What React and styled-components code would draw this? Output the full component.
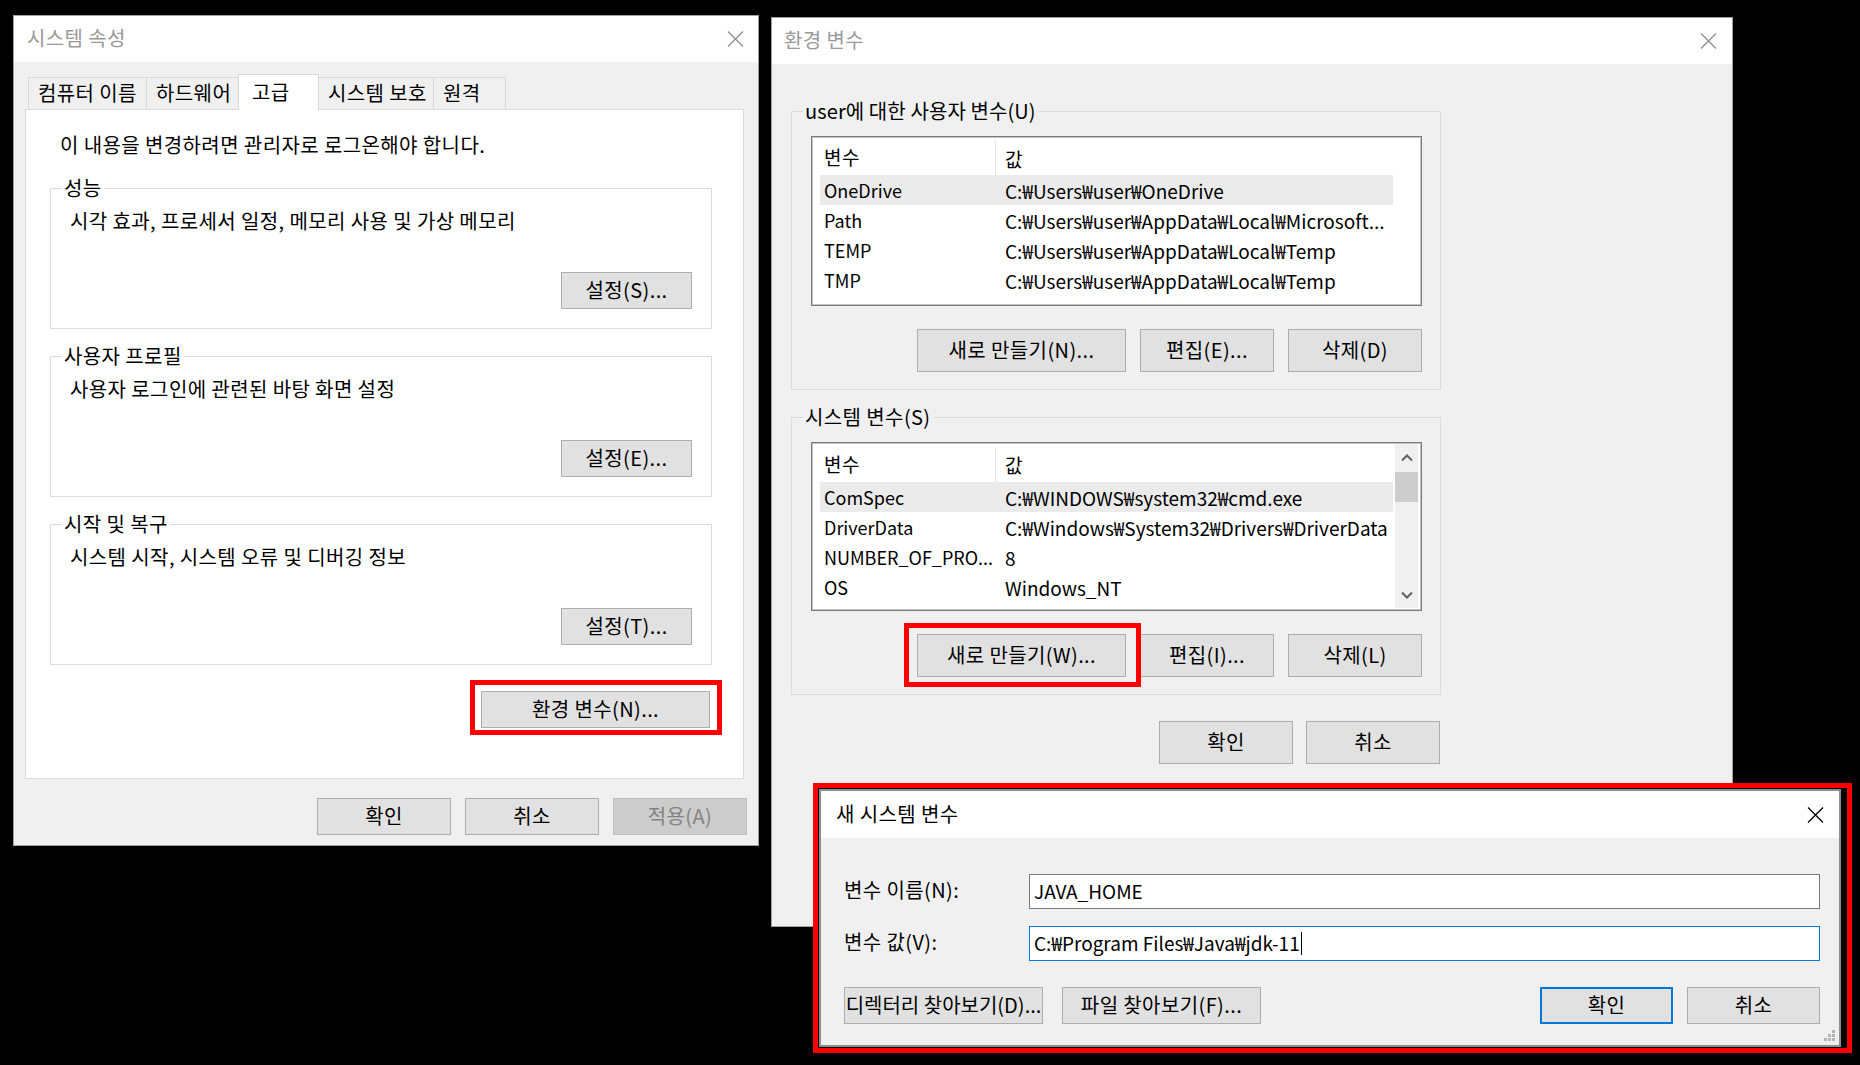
import React from 'react';
import styled, { createGlobalStyle } from 'styled-components';

const GlobalStyle = createGlobalStyle`
  html, body {
    margin: 0;
    padding: 0;
    background: #000;
  }
  body {
    font-family: "Noto Sans CJK KR", "Noto Sans", sans-serif;
  }
`;

const Desktop = styled.div`
  position: relative;
  width: 1860px;
  height: 1065px;
  background: #000;
  overflow: hidden;
`;

// windows sit on a free desktop canvas
const Window = styled.div`
  position: absolute;
  left: ${(p) => p.$left}px;
  top: ${(p) => p.$top}px;
  width: ${(p) => p.$width}px;
  height: ${(p) => p.$height}px;
  box-sizing: border-box;
  display: flex;
  flex-direction: column;
  background: #f0f0f0;
  border: 1px solid #a0a0a0;
  color: #000;
  font-size: 20px;
  letter-spacing: 0.4px;
`;

const TitleBar = styled.div`
  flex: none;
  height: ${(p) => p.$height}px;
  display: flex;
  align-items: center;
  justify-content: space-between;
  padding: 0 ${(p) => p.$padRight || 14}px 0 ${(p) => p.$padLeft || 13}px;
  background: #fff;
`;

const TitleText = styled.span`
  color: ${(p) => (p.$active ? '#000' : '#999')};
  font-size: 20px;
  line-height: 24px;
  padding-bottom: 2px;
`;

const CloseIcon = ({ active }) => (
  <svg width="17" height="16" viewBox="0 0 17 16">
    <path
      d="M1 0.5 L16 15.5 M16 0.5 L1 15.5"
      stroke={active ? '#000' : '#8f8f8f'}
      strokeWidth="1.3"
      fill="none"
    />
  </svg>
);

const Button = styled.button`
  box-sizing: border-box;
  width: ${(p) => p.$width || 134}px;
  height: ${(p) => p.$height || 37}px;
  padding: 0 0 2px 0;
  margin: 0;
  font-family: inherit;
  font-size: 20px;
  letter-spacing: ${(p) => (p.$tight ? 0 : 0.4)}px;
  color: ${(p) => (p.$disabled ? '#838383' : '#000')};
  background: ${(p) => (p.$disabled ? '#cccccc' : '#e1e1e1')};
  border: ${(p) =>
    p.$default ? '2px solid #0078d7' : p.$disabled ? '1px solid #bfbfbf' : '1px solid #adadad'};
  white-space: nowrap;
`;

const Marked = styled.div`
  position: relative;
  display: inline-flex;
`;

// red annotation frame drawn over the screenshot
const RedFrame = styled.div`
  position: absolute;
  top: ${(p) => p.$t}px;
  left: ${(p) => p.$l}px;
  right: ${(p) => p.$r}px;
  bottom: ${(p) => p.$b}px;
  border: 5px solid #ff0000;
  pointer-events: none;
`;

/* ---------- 시스템 속성 ---------- */

const PropsBody = styled.div`
  flex: 1;
  display: flex;
  flex-direction: column;
  padding: 12px 14px 0 11px;
`;

const TabRow = styled.div`
  display: flex;
  align-items: flex-end;
  height: 36px;
  margin-left: 3px;
  margin-bottom: -1px;
  position: relative;
  z-index: 1;
`;

const Tab = styled.div`
  box-sizing: border-box;
  width: ${(p) => p.$width}px;
  height: ${(p) => (p.$active ? 36 : 33)}px;
  display: flex;
  align-items: center;
  padding: 0 0 2px ${(p) => (p.$active ? 13 : 9)}px;
  margin-left: -1px;
  background: ${(p) => (p.$active ? '#fff' : '#f0f0f0')};
  border: 1px solid #d9d9d9;
  border-bottom-color: ${(p) => (p.$active ? '#fff' : '#d9d9d9')};
  white-space: nowrap;
  &:first-child {
    margin-left: 0;
  }
`;

const TabPanel = styled.div`
  box-sizing: border-box;
  height: 670px;
  flex: none;
  display: flex;
  flex-direction: column;
  background: #fff;
  border: 1px solid #d9d9d9;
  padding: 23px 31px 0 24px;
`;

const Notice = styled.div`
  line-height: 24px;
  margin: 0 0 20px 10px;
`;

const Group = styled.fieldset`
  margin: 0 0 16px 0;
  padding: 0 19px 19px 19px;
  border: 1px solid #dcdcdc;
  min-width: 0;
`;

const Legend = styled.legend`
  padding: 0 2px;
  margin-left: -8px;
  line-height: 22px;
  letter-spacing: ${(p) => (p.$tight ? 0.1 : 0.4)}px;
`;

const GroupBody = styled.div`
  height: 99px;
  margin-top: 11px;
  display: flex;
  flex-direction: column;
  justify-content: space-between;
  align-items: flex-start;
`;

const Desc = styled.div`
  line-height: 22px;
`;

const RightRow = styled.div`
  display: flex;
  justify-content: flex-end;
  align-self: stretch;
  gap: ${(p) => p.$gap || 14}px;
  margin-top: ${(p) => p.$top || 0}px;
  margin-right: ${(p) => p.$right || 0}px;
`;

const SettingsGroup = ({ title, desc, button }) => (
  <Group>
    <Legend>{title}</Legend>
    <GroupBody>
      <Desc>{desc}</Desc>
      <RightRow>
        <Button $width={131}>{button}</Button>
      </RightRow>
    </GroupBody>
  </Group>
);

const tabs = [
  ['컴퓨터 이름', 119],
  ['하드웨어', 93],
  ['고급', 81, true],
  ['시스템 보호', 116],
  ['원격', 73],
];

const SystemProperties = () => (
  <Window $left={13} $top={15} $width={746} $height={831}>
    <TitleBar $height={46}>
      <TitleText>시스템 속성</TitleText>
      <CloseIcon />
    </TitleBar>
    <PropsBody>
      <TabRow>
        {tabs.map(([label, w, active]) => (
          <Tab key={label} $width={w} $active={active}>
            {label}
          </Tab>
        ))}
      </TabRow>
      <TabPanel>
        <Notice>이 내용을 변경하려면 관리자로 로그온해야 합니다.</Notice>
        <SettingsGroup title="성능" desc="시각 효과, 프로세서 일정, 메모리 사용 및 가상 메모리" button="설정(S)..." />
        <SettingsGroup title="사용자 프로필" desc="사용자 로그인에 관련된 바탕 화면 설정" button="설정(E)..." />
        <SettingsGroup title="시작 및 복구" desc="시스템 시작, 시스템 오류 및 디버깅 정보" button="설정(T)..." />
        <RightRow $top={10} $right={2}>
          <Marked>
            <Button $width={229}>환경 변수(N)...</Button>
            <RedFrame $t={-11} $l={-11} $r={-12} $b={-7} />
          </Marked>
        </RightRow>
      </TabPanel>
      <RightRow $top={19} $right={-3} $gap={14}>
        <Button>확인</Button>
        <Button>취소</Button>
        <Button $disabled>적용(A)</Button>
      </RightRow>
    </PropsBody>
  </Window>
);

/* ---------- 환경 변수 ---------- */

const EnvBody = styled.div`
  flex: 1;
  display: flex;
  flex-direction: column;
  align-items: flex-start;
  padding: 36px 0 0 19px;
`;

const VarGroup = styled.fieldset`
  box-sizing: border-box;
  width: 650px;
  margin: 0 0 ${(p) => p.$bottom || 0}px 0;
  padding: 14px 18px 17px 19px;
  border: 1px solid #dcdcdc;
  min-width: 0;
`;

const ListBox = styled.div`
  box-sizing: border-box;
  height: ${(p) => p.$height}px;
  display: flex;
  background: #fff;
  border: 1px solid #7a7a7a;
  box-shadow: inset 0 0 0 1px #c4c4c4;
  padding: 1px 0 1px 8px;
  overflow: hidden;
  letter-spacing: 0;
`;

const ListTable = styled.div`
  flex: 1;
  min-width: 0;
  overflow: hidden;
`;

const HeaderRow = styled.div`
  height: ${(p) => p.$height}px;
  display: flex;
  align-items: stretch;
  font-size: 19px;
  letter-spacing: 0.4px;
`;

const Row = styled.div`
  height: 30px;
  display: flex;
  align-items: center;
  background: ${(p) => (p.$selected ? '#ebebeb' : 'transparent')};
`;

const NameCell = styled.div`
  box-sizing: border-box;
  width: 175px;
  flex: none;
  display: flex;
  align-items: center;
  padding-left: 4px;
  white-space: nowrap;
  overflow: hidden;
  font-size: ${(p) => (p.$header ? 19 : 18)}px;
`;

const ValueCell = styled.div`
  flex: 1;
  min-width: 0;
  display: flex;
  align-items: center;
  padding-left: ${(p) => (p.$header ? 9 : 10)}px;
  border-left: ${(p) => (p.$header ? '1px solid #e5e5e5' : 'none')};
  margin-top: ${(p) => (p.$header ? 3 : 0)}px;
  white-space: nowrap;
  overflow: hidden;
  font-size: 19px;
`;

const ScrollGutter = styled.div`
  width: 23px;
  flex: none;
  margin: 0 3px 1px 2px;
  display: flex;
  flex-direction: column;
  background: ${(p) => (p.$visible ? '#f0f0f0' : '#fff')};
`;

const ArrowBox = styled.div`
  height: ${(p) => p.$height}px;
  display: flex;
  align-items: center;
  justify-content: center;
`;

const Thumb = styled.div`
  height: 30px;
  margin-top: 1px;
  background: #cdcdcd;
`;

const Spacer = styled.div`
  flex: 1;
`;

const Chevron = ({ down }) => (
  <svg width="12" height="8" viewBox="0 0 12 8">
    <polyline
      points={down ? '1,1.5 6,6.5 11,1.5' : '1,6.5 6,1.5 11,6.5'}
      stroke="#606060"
      strokeWidth="2"
      fill="none"
    />
  </svg>
);

const VarList = ({ rows, height, headerHeight, scroll }) => (
  <ListBox $height={height}>
    <ListTable>
      <HeaderRow $height={headerHeight}>
        <NameCell $header>변수</NameCell>
        <ValueCell $header>값</ValueCell>
      </HeaderRow>
      {rows.map(([name, value], i) => (
        <Row key={name + i} $selected={i === 0}>
          <NameCell>{name}</NameCell>
          <ValueCell>{value}</ValueCell>
        </Row>
      ))}
    </ListTable>
    <ScrollGutter $visible={scroll}>
      {scroll && (
        <>
          <ArrowBox $height={27}>
            <Chevron />
          </ArrowBox>
          <Thumb />
          <Spacer />
          <ArrowBox $height={26}>
            <Chevron down />
          </ArrowBox>
        </>
      )}
    </ScrollGutter>
  </ListBox>
);

const userVars = [
  ['OneDrive', 'C:₩Users₩user₩OneDrive'],
  ['Path', 'C:₩Users₩user₩AppData₩Local₩Microsoft...'],
  ['TEMP', 'C:₩Users₩user₩AppData₩Local₩Temp'],
  ['TMP', 'C:₩Users₩user₩AppData₩Local₩Temp'],
];

const systemVars = [
  ['ComSpec', 'C:₩WINDOWS₩system32₩cmd.exe'],
  ['DriverData', 'C:₩Windows₩System32₩Drivers₩DriverData'],
  ['NUMBER_OF_PRO...', '8'],
  ['OS', 'Windows_NT'],
  ['Path', 'C:₩Windows₩system32;C:₩Windows;C:₩Windows₩System32₩Wbem;...'],
];

const EnvironmentVariables = () => (
  <Window $left={771} $top={17} $width={962} $height={910}>
    <TitleBar $height={46} $padLeft={12} $padRight={15}>
      <TitleText>환경 변수</TitleText>
      <CloseIcon />
    </TitleBar>
    <EnvBody>
      <VarGroup $bottom={16}>
        <Legend $tight>user에 대한 사용자 변수(U)</Legend>
        <VarList rows={userVars} height={170} headerHeight={37} />
        <RightRow $top={23}>
          <Button $width={209} $height={43}>새로 만들기(N)...</Button>
          <Button $height={43}>편집(E)...</Button>
          <Button $height={43}>삭제(D)</Button>
        </RightRow>
      </VarGroup>
      <VarGroup>
        <Legend>시스템 변수(S)</Legend>
        <VarList rows={systemVars} height={169} headerHeight={38} scroll />
        <RightRow $top={23}>
          <Marked>
            <Button $width={209} $height={43}>새로 만들기(W)...</Button>
            <RedFrame $t={-11} $l={-13} $r={-15} $b={-10} />
          </Marked>
          <Button $height={43}>편집(I)...</Button>
          <Button $height={43}>삭제(L)</Button>
        </RightRow>
      </VarGroup>
      <RightRow $top={26} $gap={13} style={{ width: 649 }}>
        <Button $height={43}>확인</Button>
        <Button $height={43}>취소</Button>
      </RightRow>
    </EnvBody>
  </Window>
);

/* ---------- 새 시스템 변수 ---------- */

const DialogFrame = styled.div`
  position: absolute;
  left: 813px;
  top: 783px;
  width: 1039px;
  height: 270px;
  box-sizing: border-box;
  border: 5px solid #ff0000;
  background: #000;
  padding: 1px 6px 1px 1px;
  display: flex;
`;

const Dialog = styled.div`
  position: relative;
  flex: 1;
  display: flex;
  flex-direction: column;
  background: #f0f0f0;
  border: 2px solid #8f8f8f;
  font-size: 20px;
  letter-spacing: 0.4px;
`;

const DialogBody = styled.div`
  flex: 1;
  display: flex;
  flex-direction: column;
  padding: 36px 19px 0 23px;
`;

const FieldGrid = styled.div`
  display: grid;
  grid-template-columns: 185px 1fr;
  row-gap: 17px;
  align-items: center;
`;

const FieldLabel = styled.div`
  line-height: 24px;
  padding-bottom: 3px;
`;

const TextBox = styled.div`
  box-sizing: border-box;
  height: 35px;
  display: flex;
  align-items: center;
  padding: 0 0 2px 4px;
  background: #fff;
  border: 1px solid ${(p) => (p.$focused ? '#0078d7' : '#7a7a7a')};
  font-size: 19px;
  letter-spacing: 0;
  white-space: nowrap;
`;

const Caret = styled.span`
  display: inline-block;
  width: 1px;
  height: 23px;
  margin: 2px 0 0 1px;
  background: #000;
`;

const DialogButtons = styled.div`
  display: flex;
  align-items: center;
  margin-top: 26px;
  gap: 19px;
`;

const ButtonGroup = styled.div`
  display: flex;
  gap: ${(p) => p.$gap}px;
  margin-left: ${(p) => (p.$push ? 'auto' : '0')};
`;

const Grip = styled.svg`
  position: absolute;
  right: 3px;
  bottom: 3px;
`;

const NewVariableDialog = () => (
  <DialogFrame>
    <Dialog>
      <TitleBar $height={47} $padLeft={15} $padRight={15}>
        <TitleText $active>새 시스템 변수</TitleText>
        <CloseIcon active />
      </TitleBar>
      <DialogBody>
        <FieldGrid>
          <FieldLabel>변수 이름(N):</FieldLabel>
          <TextBox>JAVA_HOME</TextBox>
          <FieldLabel>변수 값(V):</FieldLabel>
          <TextBox $focused>
            C:₩Program Files₩Java₩jdk-11
            <Caret />
          </TextBox>
        </FieldGrid>
        <DialogButtons>
          <ButtonGroup $gap={19}>
            <Button $width={199} $tight>디렉터리 찾아보기(D)...</Button>
            <Button $width={199}>파일 찾아보기(F)...</Button>
          </ButtonGroup>
          <ButtonGroup $gap={14} $push>
            <Button $width={133} $default>확인</Button>
            <Button $width={133}>취소</Button>
          </ButtonGroup>
        </DialogButtons>
      </DialogBody>
      <Grip width="12" height="12" viewBox="0 0 12 12">
        {[
          [8, 0],
          [4, 4],
          [8, 4],
          [0, 8],
          [4, 8],
          [8, 8],
        ].map(([x, y]) => (
          <rect key={`${x}-${y}`} x={x} y={y} width="3" height="3" fill="#b4b4b4" />
        ))}
      </Grip>
    </Dialog>
  </DialogFrame>
);

export default function App() {
  return (
    <>
      <GlobalStyle />
      <Desktop>
        <SystemProperties />
        <EnvironmentVariables />
        <NewVariableDialog />
      </Desktop>
    </>
  );
}
